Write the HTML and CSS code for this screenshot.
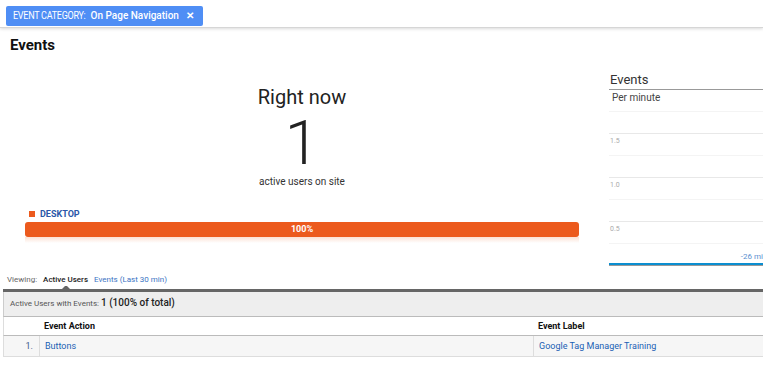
FILE: index.html
```html
<!DOCTYPE html>
<html lang="en">
<head>
  <meta charset="UTF-8" />
  <title>Real-Time Events</title>
  <link rel="stylesheet" href="styles.css">
</head>
<body>
  <div class="topbar">
    <span class="chip">
      <span class="chip-key">EVENT CATEGORY:</span>
      <span class="chip-val">On Page Navigation</span>
      <span class="chip-x">&#x2715;</span>
    </span>
  </div>

  <h1 class="title">Events</h1>

  <section class="overview">
    <div class="now">
      <div class="now-label">Right now</div>
      <div class="now-count">1</div>
      <div class="now-sub">active users on site</div>
      <div class="legend"><span class="swatch"></span>DESKTOP</div>
      <div class="bar"><span>100%</span></div>
      <div class="bar-glow"></div>
    </div>

    <div class="chart">
      <div class="chart-title">Events</div>
      <div class="chart-unit">Per minute</div>
      <div class="plot">
        <div class="grid-row faint"></div>
        <div class="grid-row"><span>1.5</span></div>
        <div class="grid-row faint"></div>
        <div class="grid-row"><span>1.0</span></div>
        <div class="grid-row faint"></div>
        <div class="grid-row"><span>0.5</span></div>
        <div class="grid-row faint axis-row"><span class="axis-label">-26 mi</span></div>
      </div>
      <div class="axis"></div>
    </div>
  </section>

  <div class="viewing">
    <span class="viewing-key">Viewing:</span>
    <span class="tab active">Active Users</span>
    <span class="tab">Events (Last 30 min)</span>
  </div>

  <section class="report">
    <div class="summary">
      Active Users with Events: <b>1 (100% of total)</b>
    </div>
    <div class="row head">
      <div class="cell num"></div>
      <div class="cell action">Event Action</div>
      <div class="cell label">Event Label</div>
    </div>
    <div class="row data">
      <div class="cell num">1.</div>
      <div class="cell action"><a href="#">Buttons</a></div>
      <div class="cell label"><a href="#">Google Tag Manager Training</a></div>
    </div>
  </section>
</body>
</html>
```

FILE: styles.css
```css
/* Reset and base */
* {
  box-sizing: border-box;
  margin: 0;
  padding: 0;
}
body {
  font-family: Roboto, 'Liberation Sans', Arial, sans-serif;
  background: #fff;
  color: #222;
  width: 763px;
  overflow: hidden;
}
a {
  color: #1a5fb4;
  text-decoration: none;
}

/* Filter bar */
.topbar {
  height: 28px;
  padding: 4px 0 0 6px;
  border-bottom: 1px solid #d6d6d6;
  box-shadow: 0 1px 3px rgba(0,0,0,0.15);
}
.chip {
  display: inline-flex;
  align-items: center;
  height: 20px;
  width: 197px;
  padding: 0 9px 0 7px;
  background: #4f8ef5;
  border-radius: 2px;
  color: #fff;
  font-size: 10px;
  white-space: nowrap;
}
.chip-key {
  font-size: 10px;
  letter-spacing: -0.3px;
  transform: scaleX(0.9);
  transform-origin: left;
  margin-right: -7px;
}
.chip-val {
  margin-left: 4px;
  font-size: 10px;
  font-weight: 500;
}
.chip-x {
  margin-left: auto;
  font-size: 10px;
  font-weight: 700;
}

.title {
  font-size: 15px;
  font-weight: 700;
  color: #111;
  padding: 8px 0 0 10px;
  line-height: 18px;
}

/* Overview */
.overview {
  display: flex;
  height: 217px;
}
.now {
  width: 604px;
  padding: 30px 25px 0;
  text-align: center;
}
.now-label {
  font-size: 20px;
  line-height: 26px;
  color: #222;
}
.now-count {
  font-size: 62px;
  font-weight: 300;
  line-height: 62px;
  color: #222;
  margin-top: 2px;
}
.now-sub {
  font-size: 10px;
  line-height: 14px;
  color: #333;
  margin-top: 1px;
}
.legend {
  display: flex;
  align-items: center;
  font-size: 9px;
  font-weight: 700;
  color: #2a57a8;
  margin: 19px 0 0 4px;
  height: 12px;
}
.swatch {
  width: 6px;
  height: 6px;
  background: #ec5a1d;
  margin-right: 5px;
}
.bar {
  margin-top: 2px;
  height: 15px;
  background: #ec5a1d;
  border-radius: 3px;
  color: #fff;
  font-size: 9px;
  font-weight: 700;
  line-height: 15px;
}
.bar-glow {
  height: 6px;
  background: linear-gradient(#fbd9c9, #fff);
  opacity: 0.8;
}

/* Chart */
.chart {
  flex: 1;
  padding: 18px 0 0 5px;
}
.chart-title {
  font-size: 13px;
  line-height: 16px;
  color: #333;
  padding-left: 1px;
  border-bottom: 1px solid #999;
  padding-bottom: 1px;
}
.chart-unit {
  font-size: 10px;
  line-height: 14px;
  color: #444;
  padding: 1px 0 0 3px;
}
.plot {
  margin-top: 6px;
  display: flex;
  flex-direction: column;
}
.grid-row {
  height: 22px;
  border-top: 1px solid #e8e8e8;
  font-size: 7px;
  color: #aaa;
  padding: 3px 0 0 1px;
}
.grid-row.faint {
  border-top-color: #f4f4f4;
}
.axis-row {
  text-align: right;
  padding: 8px 0 0 0;
  height: 20px;
}
.axis-label {
  font-size: 8px;
  color: #5b8fd0;
}
.axis {
  height: 3px;
  border-bottom: 1px solid #999;
  background: #0b8ed0;
}

/* Viewing tabs */
.viewing {
  display: flex;
  gap: 6px;
  font-size: 8px;
  line-height: 12px;
  padding: 3px 0 0 7px;
  height: 18px;
}
.viewing-key {
  color: #666;
}
.tab {
  color: #3c74c4;
}
.tab.active {
  color: #222;
  font-weight: 500;
  position: relative;
}
.tab.active::after {
  content: '';
  position: absolute;
  left: 50%;
  top: 12px;
  margin-left: -5px;
  border: 4px solid transparent;
  border-bottom-color: #666;
  border-top: 0;
  width: 2px;
}

/* Report table */
.report {
  margin-left: 3px;
  border-top: 3px solid #666;
  font-size: 9px;
}
.summary {
  height: 25px;
  line-height: 22px;
  background: #eee;
  border-bottom: 1px solid #bbb;
  border-left: 1px solid #ccc;
  color: #555;
  font-size: 8px;
  padding-left: 6px;
}
.summary b {
  font-size: 10px;
  font-weight: 500;
  color: #222;
}
.row {
  display: flex;
  border-left: 1px solid #ddd;
}
.row.head {
  height: 19px;
  border-bottom: 1px solid #bbb;
  font-weight: 700;
  color: #111;
}
.row.data {
  height: 21px;
  background: #f6f6f6;
  border-bottom: 1px solid #ddd;
}
.cell {
  line-height: 18px;
}
.row.data .cell {
  line-height: 20px;
}
.num {
  width: 35px;
  text-align: right;
  padding-right: 6px;
  color: #3a5a8a;
}
.action {
  width: 494px;
  padding-left: 5px;
}
.label {
  flex: 1;
  padding-left: 5px;
}
.row.data .action {
  border-left: 1px solid #ddd;
}
.row.data .label {
  border-left: 1px solid #ddd;
}
```
